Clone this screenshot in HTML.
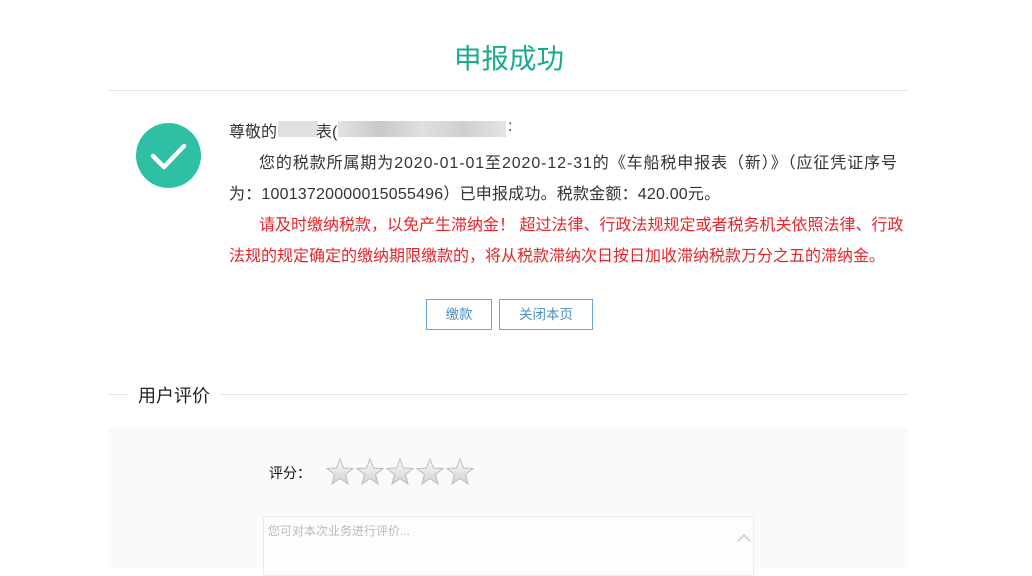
<!DOCTYPE html>
<html><head><meta charset="utf-8"><style>
body{margin:0;width:1032px;height:568px;overflow:hidden;background:#fff;font-family:"Liberation Sans","Noto Sans CJK SC",sans-serif;position:relative}
.a{position:absolute}
.t{font-size:16px;color:#333;white-space:nowrap}
.r{color:#e5262b}
.btn{position:absolute;top:299px;height:31px;border:1px solid #6aa7d8;color:#4a90c8;font-size:13.5px;line-height:30px;text-align:center;box-sizing:border-box;background:#fff}
</style></head><body>
<div class="a" style="left:0;width:1018px;top:36px;text-align:center;font-size:27.5px;color:#1aab8c">申报成功</div>
<div class="a" style="left:108px;width:800px;top:90px;height:1px;background:#e6e6e6"></div>
<svg class="a" style="left:136px;top:123px" width="65" height="65"><circle cx="32.5" cy="32.5" r="32.5" fill="#2ebfa4"/><path d="M17 33 L28 44 L48 23" stroke="#fff" stroke-width="4.5" fill="none" stroke-linecap="round" stroke-linejoin="round"/></svg>
<div class="a t" style="left:229px;top:118px">尊敬的</div>
<div class="a" style="left:278px;top:121px;width:40px;height:16px;background:#d8d8d8;opacity:.8"></div>
<div class="a t" style="left:316px;top:118px">表(</div>
<div class="a" style="left:338px;top:121px;width:168px;height:16px;background:linear-gradient(90deg,#e2e2e2,#c9c9c9,#e0e0e0,#cfcfcf,#e4e4e4)"></div>
<div class="a t" style="left:508px;top:118px">:</div>
<div class="a t" style="left:259px;top:149px;letter-spacing:0.9px">您的税款所属期为2020-01-01至2020-12-31的《车船税申报表（新）》（应征凭证序号</div>
<div class="a t" style="left:229px;top:180px;letter-spacing:0.2px">为：10013720000015055496）已申报成功。税款金额：420.00元。</div>
<div class="a t r" style="left:259px;top:211px">请及时缴纳税款，以免产生滞纳金！ 超过法律、行政法规规定或者税务机关依照法律、行政</div>
<div class="a t r" style="left:229px;top:242px">法规的规定确定的缴纳期限缴款的，将从税款滞纳次日按日加收滞纳税款万分之五的滞纳金。</div>
<div class="btn" style="left:426px;width:66px">缴款</div>
<div class="btn" style="left:499px;width:94px">关闭本页</div>
<div class="a" style="left:108px;width:800px;top:394px;height:1px;background:#e6e6e6"></div>
<div class="a" style="left:128px;top:382px;padding:0 10px;background:#fff;font-size:18px;color:#222">用户评价</div>
<div class="a" style="left:108px;width:800px;top:427px;height:141px;background:#fafafa"></div>
<div class="a" style="left:269px;top:463px;font-size:14px;color:#111">评分：</div>
<svg class="a" style="left:326px;top:458px" width="150" height="30"><defs><linearGradient id="g" x1="0" y1="0" x2="0" y2="1"><stop offset="0" stop-color="#fbfbfb"/><stop offset="1" stop-color="#d2d2d2"/></linearGradient><path id="s" d="M14 1 L17.5 10 L27 10.5 L19.5 16.5 L22 26 L14 20.5 L6 26 L8.5 16.5 L1 10.5 L10.5 10 Z" fill="url(#g)" stroke="#bdbdbd" stroke-width="1"/></defs><use href="#s"/><use href="#s" x="30"/><use href="#s" x="60"/><use href="#s" x="90"/><use href="#s" x="120"/></svg>
<div class="a" style="left:263px;top:516px;width:491px;height:60px;border:1px solid #ececec;background:#fdfdfd;box-sizing:border-box"></div>
<div class="a" style="left:268px;top:522px;font-size:12px;color:#bbb">您可对本次业务进行评价...</div>
<svg class="a" style="left:737px;top:533px" width="14" height="10"><path d="M1 8 L7 2 L13 8" stroke="#ccc" stroke-width="1.5" fill="none"/></svg>
</body></html>
